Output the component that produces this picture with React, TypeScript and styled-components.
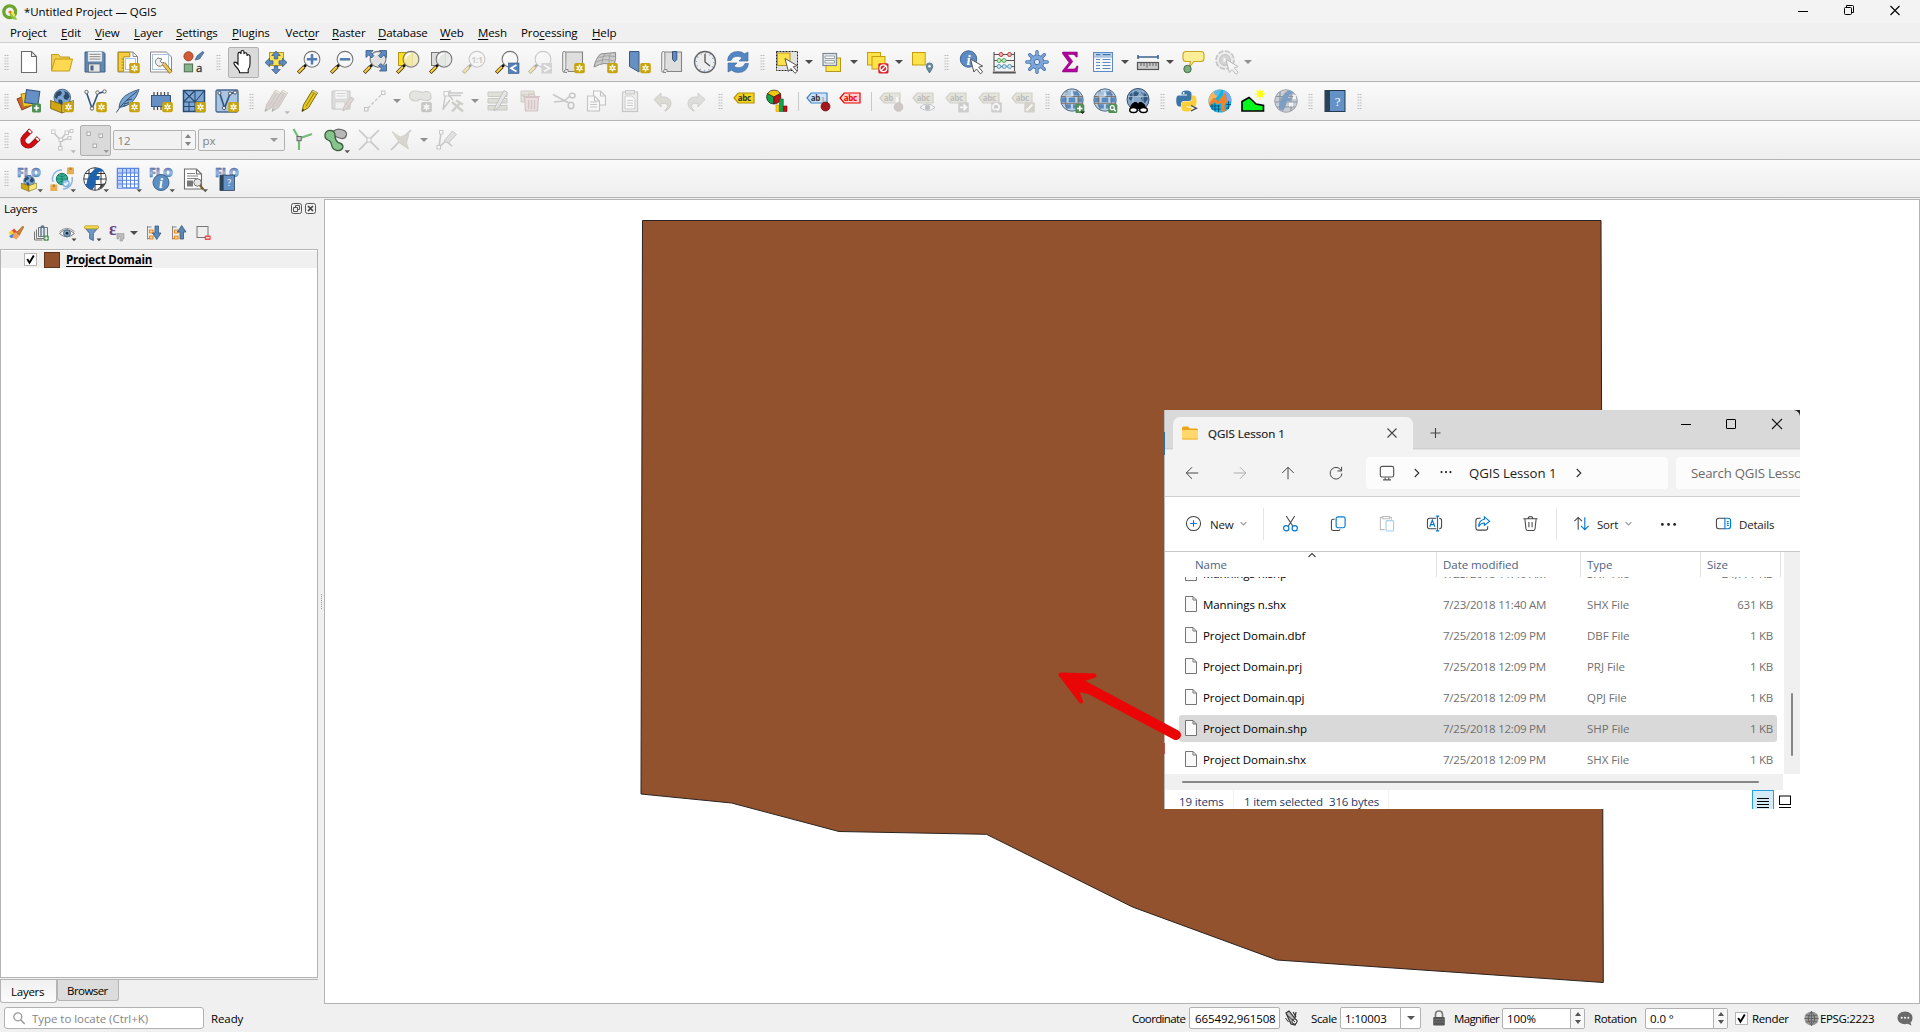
import React from 'react';
import styled, { createGlobalStyle, css } from 'styled-components';

const Global = createGlobalStyle`
  *, *::before, *::after { box-sizing: border-box; }
  html, body { margin: 0; padding: 0; overflow: hidden; }
  body { font-family: "Open Sans", "Noto Sans", sans-serif; font-size: 11.5px; color: #000; background: #f0f0f0; }
`;

/* ---------- shared drawing parts ---------- */

const Star = () => (
  <g>
    <rect x="13.2" y="12.9" width="10.6" height="10.4" rx="1.8" fill="#c8a40c" />
    <path d="M18.5 14.6v7M15.5 16.3l6 3.6M21.5 16.3l-6 3.6" stroke="#fff" strokeWidth="1.5" fill="none" />
    <circle cx="18.5" cy="18.1" r="0.9" fill="#c8a40c" />
  </g>
);
const Plus = ({ x = 15, y = 14.5 }) => (
  <g>
    <rect x={x} y={y} width="9" height="9" rx="1.6" fill="#4f8f55" />
    <path d={`M${x + 4.5} ${y + 1.8}v5.4M${x + 1.8} ${y + 4.5}h5.4`} stroke="#fff" strokeWidth="1.7" />
  </g>
);
const Drop = () => <path d="M20.5 22.3h5.5l-2.75 2.9z" fill="#555" />;
const Glass = ({ fill = '#f7f7f7' }) => (
  <g>
    <path d="M1.2 22.8l6-6" stroke="#4a3a10" strokeWidth="3.6" />
    <path d="M1.6 22.2l5.4-5.4" stroke="#f7cf3f" strokeWidth="2" />
    <path d="M7 16.8l3-2.8" stroke="#111" strokeWidth="2.6" />
    <circle cx="15" cy="9.3" r="7.9" fill={fill} fillOpacity="0.88" stroke="#777" strokeWidth="1.1" />
    <path d="M9.6 8.5a5.6 5.6 0 0 1 5-4.8" stroke="#fff" strokeWidth="1.4" fill="none" />
  </g>
);
const Cursor = ({ x = 10, y = 8 }) => (
  <path transform={`translate(${x} ${y})`} d="M0 0l3.4 13 2.6-3 4 4.8 2.2-1.9-4-4.7 4-1.1z" fill="#fff" stroke="#555" strokeWidth="1" />
);
const Pencil = ({ c = '#e8c91f', d = '#7a6a10' }) => (
  <g>
    <path d="M5 22.5l1.5-6.6L15.2 1.6l5 2.7-8.7 14.4z" fill={c} stroke={d} strokeWidth="1" />
    <path d="M9 17.4L17.8 3" stroke={d} strokeWidth="0.8" />
    <path d="M5 22.5l.6-2.6 1.7.9z" fill="#222" />
    <path d="M14.6 2.6l5 2.8 1-1.6-5-2.7z" fill="#f3e9a8" stroke={d} strokeWidth="0.7" />
  </g>
);
const Tag = ({ fill, stroke, ink, label = 'abc' }: { fill: string; stroke: string; ink: string; label?: string }) => (
  <g>
    <path d="M1 9l4.2-5H21v10H5.2z" fill={fill} stroke={stroke} strokeWidth="1.2" />
    <text x="4.7" y="11.9" fontSize="8" fontWeight="700" fill={ink} fontFamily="Open Sans, sans-serif" letterSpacing="-0.3">{label}</text>
  </g>
);
const GrayTag = ({ label }: { label?: string }) => <Tag fill="#c6c5ad" stroke="#908f78" ink="#555" label={label} />;
const Globe = () => (
  <g>
    <circle cx="12" cy="11" r="11.2" fill="#b9cfe6" stroke="#42617f" strokeWidth="0.9" />
    <path d="M5.5 2.8h5.3v3.8H4.2zM13 2.5h4.6l2.6 4H13zM1.7 8.4h4.8v4.9H1.5zM8.7 8.4h6.5v4.9H8.7zM17.4 8.4h4.9v4.9h-4.9zM4.5 15.2h6.3v4.4H6.4zM13 15.2h6.5l-3 4.4H13z" fill="#2d6cae" opacity="0.7" />
    <path d="M7.5 1.5c-3 6-3 13 0 19M16.5 1.5c3 6 3 13 0 19M.8 7.5h22.4M.8 14.3h22.4" stroke="#7d746d" strokeWidth="1" fill="none" />
    <ellipse cx="9" cy="5.5" rx="5" ry="3" fill="#fff" opacity="0.45" />
  </g>
);
const Earth = () => (
  <g>
    <circle cx="12.3" cy="8.5" r="8.3" fill="#7ba5d3" stroke="#34536f" strokeWidth="0.8" />
    <path d="M6 3.8l4-2.4 2 2-1 2.8-3 1-1 3-2.4-2zM14 2l4 1.700 1.700 4-2.400 3.300-3-1-1-3 2-2zM8.400 10.300l3.500.7 1 3-2.200 2-2.300-2.800z" fill="#2d4a68" />
  </g>
);
const Box = () => (
  <g>
    <path d="M.6 11.500l11.400 4V24L.6 19.500z" fill="#cfa514" stroke="#6d5a10" strokeWidth="0.8" />
    <path d="M23.400 11.500L12 15.500V24l11.400-4.500z" fill="#fbe877" stroke="#6d5a10" strokeWidth="0.8" />
  </g>
);
const FloWord = () => (
  <g>
    <defs>
      <linearGradient id="flo" x1="0" y1="0" x2="0" y2="1">
        <stop offset="0.250" stopColor="#5c7db8" />
        <stop offset="0.550" stopColor="#a9bfe2" />
        <stop offset="0.850" stopColor="#2f86c4" />
      </linearGradient>
    </defs>
    <text x="0" y="10" fontSize="13" fontWeight="800" textLength="24" lengthAdjust="spacingAndGlyphs" fill="url(#flo)" stroke="#4a669a" strokeWidth="0.350" fontFamily="Open Sans, sans-serif">FLO</text>
  </g>
);
const Arrow4 = () => (
  <path d="M12 .5l4.300 4.500h-2.600v3.500h-3.400V5H7.700zM12 23.500l4.300-4.500h-2.600v-3.500h-3.400V19H7.700zM1 12l4.500-4.300v2.600H9v3.400H5.500v2.600zM23 12l-4.500-4.300v2.600H15v3.400h3.500v2.600z" fill="#5d8ac2" stroke="#34577f" strokeWidth="0.7" />
);
const Doc = ({ x = 0, y = 0, w = 15, h = 21 }) => (
  <path d={`M${x} ${y}h${w - 5}l5 5v${h - 5}h-${w}zM${x + w - 5} ${y}v5h5`} fill="#fff" stroke="#6b6b6b" strokeWidth="1.1" />
);
const Book = () => (
  <g>
    <rect x="2" y="1.5" width="20" height="21" fill="#6592c6" stroke="#22384e" strokeWidth="1" />
    <rect x="2" y="1.5" width="5" height="21" fill="#2c4257" />
    <text x="14.7" y="16.5" fontSize="13" textAnchor="middle" fill="#fff" fontFamily="Liberation Serif, serif">?</text>
  </g>
);
const Scroll = () => (
  <g>
    <path d="M4.500 2h17v19.500H7" fill="#dedede" stroke="#848484" strokeWidth="1.1" />
    <path d="M1.700 3.200q0-1.700 1.600-1.700t1.600 1.700v16.500q-1.500 0-1.500 1.500t2.500 1.300H3.500q-1.800 0-1.800-2z" fill="#eee" stroke="#848484" />
    <path d="M5 19.500h2v2.300" stroke="#848484" fill="none" />
  </g>
);
const Corner = ({ fill = '#888', d }: { fill?: string; d: string }) => (
  <g>
    <rect x="13.3" y="13.3" width="10.5" height="10.2" rx="1" fill={fill} />
    <path d={d} stroke="#fff" strokeWidth="1.8" fill="none" />
  </g>
);

const icons: Record<string, React.ReactNode> = {
  newDoc: <Doc x={4.5} y={1.5} />,
  open: (
    <g stroke="#c39a1b" strokeWidth="1">
      <path d="M1.500 20V4.500h7l2 2.500h9v3" fill="#f2cd4c" />
      <path d="M1.500 21L5 9h17.500l-3 12z" fill="#fcd94f" />
    </g>
  ),
  save: (
    <g>
      <path d="M2 2h18.500L22 3.500V22H2z" fill="#6088b5" stroke="#3f5f85" />
      <rect x="5" y="1.8" width="14" height="9.7" fill="#f5f5f5" stroke="#9aa7b5" strokeWidth="0.5" />
      <path d="M6.500 4.300h11M6.500 6.700h11M6.500 9.100h11" stroke="#777" strokeWidth="0.9" />
      <rect x="5.5" y="14" width="11.5" height="8" fill="#e6e6e6" stroke="#555" strokeWidth="0.6" />
      <rect x="7.5" y="15.5" width="3" height="5" fill="#43648b" />
    </g>
  ),
  layout: (
    <g>
      <path d="M2 2h15l4.500 4.500V22H2z" fill="#fff" stroke="#888" />
      <path d="M17 2v4.500h4.500" fill="none" stroke="#888" />
      <path d="M2.300 2.300h11.500v4.500H7.700v14.500H2.300z" fill="#f5cf41" stroke="#b58e0e" />
      <path d="M5.500 9h2M5.500 12h2M5.500 15h2M5.500 18h2" stroke="#8a6c07" strokeWidth="0.8" />
      <rect x="9.5" y="8.5" width="10" height="11" fill="none" stroke="#a9c1e6" />
      <Star />
    </g>
  ),
  layoutMgr: (
    <g>
      <path d="M1.500 2h16l5 5v15h-21z" fill="#fff" stroke="#888" />
      <rect x="3.5" y="4.5" width="16" height="15" fill="none" stroke="#a9c1e6" />
      <path d="M9 8a4.300 4.300 0 1 0 6 4.500L13 13l-1.800-1.800L13 9z" fill="#eee" stroke="#777" />
      <path d="M14.500 13.500l7.500 9" stroke="#8a6c17" strokeWidth="4" />
      <path d="M14.500 13.500l7.300 8.700" stroke="#edca5a" strokeWidth="2.5" />
    </g>
  ),
  style: (
    <g>
      <circle cx="6.5" cy="6.3" r="4.6" fill="#cf5c36" stroke="#8b3a1c" strokeWidth="0.8" />
      <path d="M13 10l2-4 5.500-4.500 1.500 1L17.500 9z" fill="#5d83b3" stroke="#3b5a85" strokeWidth="0.7" />
      <rect x="2.3" y="14" width="8.3" height="7.8" fill="#86b58b" stroke="#4c6c50" />
      <text x="14" y="21.8" fontSize="11.5" fill="#333" stroke="#333" strokeWidth="0.3" fontFamily="Open Sans, sans-serif">a</text>
    </g>
  ),
  hand: (
    <path d="M8.500 21.500q-1-2.500-4.500-6-1.800-2.500-.6-3.200 1.600-.7 3.600 2V4q0-1.600 1.500-1.600T10 4V1.800Q10 .5 11.500.5T13 2v2q0-1.300 1.500-1.300T16 4.200v1.600q.3-1.200 1.500-1.100T19 6.300V14q0 3.500-1.800 5.500v3.200h-8.700z" fill="#fff" stroke="#111" strokeWidth="1.1" />
  ),
  panSel: (
    <g>
      <rect x="5.5" y="2.5" width="14" height="13" fill="#fde24b" stroke="#b6961b" />
      <g transform="translate(0 .5)"><Arrow4 /></g>
    </g>
  ),
  zoomIn: <g><Glass /><path d="M15 4v10.500M9.800 9.300h10.400" stroke="#4e7cb3" strokeWidth="2.5" /></g>,
  zoomOut: <g><Glass /><path d="M9.800 9.300h10.400" stroke="#4e7cb3" strokeWidth="2.5" /></g>,
  zoomFull: (
    <g>
      <Glass fill="#ddd" />
      <path d="M3 .5h7L8 2.700l3 3-2.300 2.300-3-3L3 7.500zM23.500.5h-7l2 2.200-3 3 2.300 2.300 3-3 2.700 2.500zM23.500 21h-7l2-2.200-3-3 2.300-2.300 3 3 2.700-2.500z" fill="#5d8ac2" stroke="#34577f" strokeWidth="0.8" />
    </g>
  ),
  zoomSel: <g><rect x="2.5" y="2.5" width="14" height="13" fill="#fde01e" stroke="#b6961b" /><Glass fill="#f0e9b8" /></g>,
  zoomLayer: <g><rect x="2.5" y="2.5" width="14" height="13" fill="#ddd" stroke="#777" /><Glass fill="#e6e8e6" /></g>,
  zoomNative: (
    <g>
      <Glass />
      <text x="9.5" y="12.5" fontSize="8" fontWeight="700" fill="#777" fontFamily="Open Sans, sans-serif">1:1</text>
    </g>
  ),
  zoomLast: <g><Glass /><rect x="13.3" y="13" width="10.7" height="10.5" fill="#5580b8" stroke="#34577f" strokeWidth="0.6" /><path d="M21.500 15l-5.500 3.200 5.500 3.300" stroke="#fff" strokeWidth="1.8" fill="none" /></g>,
  zoomNext: <g><Glass /><rect x="13.3" y="13" width="10.7" height="10.5" fill="#999" /><path d="M16 15l5.500 3.200-5.500 3.300" stroke="#fff" strokeWidth="1.8" fill="none" /></g>,
  mapView: <g><Scroll /><Star /></g>,
  mapView3d: (
    <g>
      <path d="M0 17Q2 8 6.500 4L21.500 2.500q1 5-1.500 13.500Q11 10.500 0 17z" fill="#ccc" stroke="#888" />
      <path d="M4.500 7.500q8-3 17-1M2 12q8-4 18.500-1M11 3.500Q8 8 8 13.500M16 3.500Q15 8 15 14" stroke="#999" strokeWidth="0.8" fill="none" />
      <Star />
    </g>
  ),
  bookmarkNew: <g><path d="M2.500 1.500h9.500V22L2.500 16.500z" fill="#6690c4" stroke="#395a80" /><Star /></g>,
  bookmarks: <g><Scroll /><path d="M12.500 1.500h4.300v8l-2.100 2.200-2.200-2.200z" fill="#5d8ac2" stroke="#2f4d70" strokeWidth="0.9" /></g>,
  clock: (
    <g>
      <circle cx="12" cy="12" r="10.5" fill="#ededed" stroke="#666" strokeWidth="1.3" />
      <circle cx="12" cy="12" r="8.8" fill="none" stroke="#5d8ac2" strokeWidth="1.4" strokeDasharray="0.8 3.81" />
      <path d="M12 4v8l5 4" stroke="#555" strokeWidth="1.3" fill="none" />
    </g>
  ),
  refresh: (
    <g fill="#5286c4" stroke="#3b679c" strokeWidth="0.6">
      <path d="M1.500 10.500Q2.500 1.500 12 1.500q4 0 6.500 2.300L22 2v9h-9l3-3q-1.500-1.700-4-1.700Q6.500 6.300 5 10.500z" />
      <path d="M22.500 13.500q-1 9-10.500 9-4 0-6.500-2.300L2 22v-9h9l-3 3q1.500 1.700 4 1.700 5.500 0 7-4.200z" />
    </g>
  ),
  selectRect: (
    <g>
      <rect x="1.5" y="1.5" width="21" height="19" fill="#e2e2e2" stroke="#222" strokeDasharray="2 1" />
      <rect x="2.5" y="3" width="12.5" height="12.5" fill="#fde24b" stroke="#b6961b" />
      <Cursor x={10} y={8.5} />
    </g>
  ),
  selectForm: (
    <g>
      <rect x="6" y="8" width="14.5" height="13.5" fill="#fde94b" stroke="#b6961b" />
      <rect x="3" y="3.5" width="13.5" height="12" fill="#ececec" stroke="#7b8893" strokeWidth="1.2" />
      <path d="M5 6h9.500v2.500H5zM5 10.500h9.500V13H5z" fill="#fff" stroke="#8b979f" strokeWidth="0.9" />
    </g>
  ),
  deselect: (
    <g>
      <rect x="2.5" y="2.5" width="13" height="12.5" fill="#fde24b" stroke="#c69e0a" />
      <rect x="7" y="6.5" width="13" height="12.5" fill="#fde24b" stroke="#c69e0a" />
      <rect x="13.3" y="13.2" width="10.2" height="10.2" rx="1.5" fill="#d8232a" />
      <circle cx="18.4" cy="18.3" r="3.4" fill="none" stroke="#fff" strokeWidth="1.3" />
      <path d="M16 20.700l4.800-4.800" stroke="#fff" strokeWidth="1.3" />
    </g>
  ),
  selectLoc: (
    <g>
      <rect x="2.5" y="2.5" width="12.7" height="12.5" fill="#fde24b" stroke="#c69e0a" />
      <path d="M19.500 23q-3.300-4.500-3.300-6.800a3.300 3.300 0 0 1 6.600 0q0 2.300-3.300 6.800z" fill="#6a8ca0" stroke="#496a7c" strokeWidth="0.7" />
      <circle cx="19.5" cy="16.2" r="1.2" fill="#fff" />
    </g>
  ),
  identify: (
    <g>
      <circle cx="9.5" cy="9" r="8.2" fill="#5d8ac2" stroke="#40659a" />
      <text x="9.5" y="14.5" fontSize="15" fontWeight="700" fontStyle="italic" textAnchor="middle" fill="#fff" fontFamily="Liberation Serif, serif">i</text>
      <Cursor x={11.5} y={9} />
    </g>
  ),
  abacus: (
    <g>
      <path d="M2 2v19M22.500 2v19M2 4.500h20.500M2 10.500h20.500M2 16.500h20.500" stroke="#555" strokeWidth="1.1" />
      <path d="M.8 22.500h23" stroke="#555" strokeWidth="2" />
      <g strokeWidth="1">
        <g fill="#f1b2b2" stroke="#c33c3c"><circle cx="9" cy="4.5" r="2" /><circle cx="17.5" cy="4.5" r="2" /></g>
        <g fill="#c6ecc6" stroke="#58a45c"><circle cx="7" cy="10.5" r="2" /><circle cx="12" cy="10.5" r="2" /></g>
        <g fill="#c8e4f2" stroke="#5f9ab8"><circle cx="7" cy="16.5" r="2" /><circle cx="12.3" cy="16.5" r="2" /><circle cx="17.6" cy="16.5" r="2" /></g>
      </g>
    </g>
  ),
  gear: (
    <g strokeLinecap="round">
      <path d="M12 1.800v20.400M1.800 12h20.400M4.700 4.700l14.600 14.600M19.300 4.700L4.700 19.300" stroke="#4674ae" strokeWidth="3.4" />
      <circle cx="12" cy="12" r="7" fill="#7ea6d8" stroke="#4674ae" />
      <path d="M12 2v20M2 12h20M4.900 4.900l14.200 14.200M19.100 4.900L4.900 19.100" stroke="#7ea6d8" strokeWidth="1.9" />
      <circle cx="12" cy="12" r="2.7" fill="#dfe9f5" stroke="#4674ae" />
    </g>
  ),
  sigma: <path d="M4.500 2h14.800v5h-1.300q-.6-2.500-3-2.500H9.500l5.300 7-6 7.500h6.700q2.500 0 3.200-3h1.300l-.8 6H4.500v-1.300L11 12.600 4.500 3.700z" fill="#b3009d" stroke="#7c006d" strokeWidth="0.5" />,
  table: (
    <g>
      <rect x="2.5" y="2.5" width="19" height="19" fill="#f4f8fd" stroke="#5d8ac2" />
      <rect x="3" y="3" width="18" height="3.5" fill="#b8d4f0" />
      <path d="M5 4.700h4.500M11.500 4.700h8" stroke="#4773ab" strokeWidth="1.2" />
      <path d="M3 7h18" stroke="#5d8ac2" strokeWidth="0.7" />
      <path d="M5 9.500h4M5 12.500h4M5 15.500h4M5 18.500h4M11.500 9.500h8M11.500 12.500h8M11.500 15.500h8M11.500 18.500h8" stroke="#5d8ac2" strokeWidth="1" />
    </g>
  ),
  ruler: (
    <g>
      <path d="M2 7h20M2 5v4M22 5v4" stroke="#3b648e" strokeWidth="1.6" />
      <rect x="1.5" y="12.5" width="21" height="7" fill="#c9c9c9" stroke="#555" strokeWidth="1.2" />
      <path d="M5 13v3M8 13v3M11 13v4.500M14 13v3M17 13v3M20 13v3" stroke="#555" strokeWidth="0.9" />
    </g>
  ),
  tip: (
    <g>
      <path d="M5 1.500h15q3 0 3 3v4q0 3-3 3h-7L8 17.500l1.500-6H5q-3 0-3-3v-4q0-3 3-3z" fill="#fbee97" stroke="#c8a51d" strokeWidth="1.1" />
      <circle cx="6.5" cy="19" r="3.7" fill="#7cae80" stroke="#3f6d47" />
    </g>
  ),
  actionGray: (
    <g>
      <circle cx="11" cy="10" r="9" fill="#ddd" stroke="#666" strokeWidth="1.6" strokeDasharray="5.5 1.5" />
      <circle cx="11" cy="10" r="5.5" fill="#999" stroke="#666" />
      <path d="M9.500 7.500v5l4-2.500z" fill="#fff" />
      <Cursor x={12} y={9.5} />
    </g>
  ),
  dataSource: (
    <g>
      <rect x="2" y="7" width="12" height="12" transform="rotate(-24 8 13)" fill="#d0662e" stroke="#8d3f18" />
      <rect x="5" y="4" width="12" height="13" transform="rotate(-10 11 10)" fill="#f6c52f" stroke="#a67c12" />
      <rect x="8.5" y="1.5" width="13.5" height="13" transform="rotate(8 15 8)" fill="#6690c4" stroke="#33557d" />
      <Plus />
    </g>
  ),
  geopackage: <g><Earth /><Box /><Star /></g>,
  shapefile: (
    <g>
      <path d="M3.500 3.500l5.500 16L15 4.500l7-2" stroke="#34577f" strokeWidth="1.6" fill="none" />
      <g fill="#fff" stroke="#555" strokeWidth="0.9"><circle cx="3.5" cy="3" r="1.7" /><circle cx="9" cy="19.5" r="1.7" /><circle cx="14.5" cy="3.5" r="1.7" /><circle cx="21.5" cy="2.5" r="1.7" /></g>
      <Star />
    </g>
  ),
  feather: (
    <g>
      <path d="M3 18.500Q4 9 12 5q5-3 11-4.500Q21 8 16.500 12.500 12 17 3 18.500z" fill="#7ba5d3" stroke="#3d6186" />
      <path d="M.3 23.500Q6 14 21 2.500M8 15l5-1.500M10.500 11.500l5.500-1.500M7 17l3-.5" stroke="#2f4d6f" strokeWidth="1" fill="none" />
      <Star />
    </g>
  ),
  memory: (
    <g>
      <path d="M5 3v18M8.500 3v18M12 3v18M15.500 3v18M19 3v12" stroke="#444" strokeWidth="1.2" />
      <rect x="2.5" y="6.5" width="19" height="11" fill="#6690c4" stroke="#34577f" />
      <Star />
    </g>
  ),
  meshLayer: (
    <g>
      <rect x="1.5" y="1.5" width="21" height="21" fill="#7da7d6" stroke="#2b4b6e" strokeWidth="1.5" />
      <path d="M1.500 13h21M13 1.500v21M1.500 1.500L13 13M13 1.500L1.500 13M22.500 1.500L13 13M7 13v9M1.500 17.500H13" stroke="#2b4b6e" strokeWidth="1.1" />
      <Star />
    </g>
  ),
  virtual: (
    <g>
      <rect x="1" y="1" width="22" height="22" rx="1.5" fill="#a8c6e4" stroke="#45688f" strokeWidth="1.3" />
      <path d="M5 5l4.500 14L15 5l4-1.500" stroke="#34577f" strokeWidth="1.7" fill="none" />
      <g fill="#fff" stroke="#445" strokeWidth="0.9"><circle cx="4.5" cy="4" r="1.6" /><circle cx="9" cy="19" r="1.6" /><circle cx="15" cy="4.5" r="1.6" /><circle cx="20" cy="3.5" r="1.6" /></g>
      <Star />
    </g>
  ),
  pencils: (
    <g>
      <g transform="translate(-4 0)"><Pencil c="#a8958f" d="#7d6c66" /></g>
      <g transform="translate(3 0)"><Pencil c="#a8958f" d="#7d6c66" /></g>
    </g>
  ),
  pencil: <Pencil />,
  saveEdits: (
    <g>
      <path d="M2 2h18v18H2z" fill="#b5b5b5" stroke="#777" />
      <rect x="5" y="2" width="12" height="8" fill="#fff" stroke="#888" strokeWidth="0.6" />
      <path d="M6.500 4.500h9M6.500 7h9" stroke="#888" />
      <rect x="5" y="13" width="10" height="7" fill="#eee" stroke="#777" strokeWidth="0.6" />
      <path d="M13 22l1-4.500L21 8l3 2-7 9.500z" fill="#b9a09a" stroke="#86706a" />
    </g>
  ),
  addLine: (
    <g>
      <path d="M5 19L19 5" stroke="#777" strokeWidth="1.4" strokeDasharray="3 2" />
      <g fill="#fff" stroke="#666"><rect x="1.5" y="18.5" width="3.5" height="3.5" /><rect x="18.5" y="2" width="3.5" height="3.5" /></g>
    </g>
  ),
  addPoly: (
    <g>
      <path d="M1.500 7q0-5 6-5 3 0 5 1t5-.5q5.500 0 5.500 5 0 4-4 4-3 0-5-1t-5 1.500q-7.500 0-7.500-5z" fill="#c5c8bd" stroke="#84877c" strokeWidth="1.2" />
      <rect x="13.2" y="12.9" width="10.6" height="10.4" rx="1.8" fill="#77786a" />
      <path d="M18.500 14.600v7M15.500 16.300l6 3.600M21.500 16.300l-6 3.600" stroke="#fff" strokeWidth="1.5" fill="none" />
    </g>
  ),
  vertex: (
    <g stroke="#777" fill="none">
      <path d="M4.500 5L2 21M7 5l5 6M7 4h15M7 6.500h13M9 1v3M2 20l7-9" strokeWidth="1.4" />
      <rect x="3" y="2.5" width="4.5" height="4.5" fill="#fff" />
      <path d="M11 22.500l9-9.500M15 11.500l7 4M11 13l11 9.500" strokeWidth="2.4" stroke="#8b8b80" />
    </g>
  ),
  tableEdit: (
    <g>
      <path d="M2 3h19v4.500H2zM2 9.500h19v4.500H2zM2 16.500h19V21H2z" fill="#b8b7a4" stroke="#7b7a6b" />
      <path d="M8 22l1.500-5L18 1.500l3.500 2L13 18z" fill="#ccc" stroke="#666" />
    </g>
  ),
  trash: (
    <g>
      <path d="M2 2h13v4H2zM2 6h4v7H2z" fill="#c1beaa" stroke="#87846f" />
      <path d="M5.500 8.500h14l-1 13.500h-12z" fill="#d6b9bb" stroke="#9c6c70" strokeWidth="1.2" />
      <path d="M4 7.500h17M9.500 7V5h6v2M9.500 11v9M12.500 11v9M15.500 11v9" stroke="#9c6c70" strokeWidth="1.2" fill="none" />
    </g>
  ),
  cut: (
    <g fill="none" stroke="#777" strokeWidth="1.6">
      <path d="M1 5.500l16 8.500M2 13l10-1 6-5" />
      <ellipse cx="20.3" cy="6.5" rx="2.8" ry="2.3" /><ellipse cx="19" cy="16.5" rx="2.8" ry="3.2" />
    </g>
  ),
  copy: (
    <g>
      <Doc x={8.5} y={2} w={12} h={14} />
      <Doc x={2.5} y={7} w={12} h={15} />
      <path d="M5 13h7M5 15.500h7M5 18h7" stroke="#777" />
    </g>
  ),
  paste: (
    <g>
      <rect x="4.5" y="3" width="15" height="19.5" fill="#e4e4e0" stroke="#777" strokeWidth="1.2" />
      <rect x="7.5" y="1.5" width="9" height="3.5" fill="#ccc" stroke="#777" />
      <path d="M7 7h7l3 3v10H7z" fill="#fff" stroke="#888" />
      <path d="M9 11.500h6M9 14h6M9 16.500h6" stroke="#888" />
    </g>
  ),
  undo: <path d="M3 10.500L10 4v4h3.500q6.500.5 6.500 7 0 4-5.500 7-1 .3-.5-.5 3-3 2.500-5t-3-2.200H10V18z" fill="#b3ab9b" stroke="#8f887a" />,
  redo: <path d="M21 10.500L14 4v4h-3.500Q4 8.500 4 15q0 4 5.500 7 1 .3.5-.5-3-3-2.500-5t3-2.200H14V18z" fill="#b5b8ac" stroke="#8f9188" />,
  tagYellow: <Tag fill="#f3d51b" stroke="#b5930c" ink="#333" />,
  diagram: (
    <g>
      <path d="M8 8L1.500 4.500A7 7 0 0 0 8 15z" fill="#15a04a" stroke="#222" strokeWidth="0.7" />
      <path d="M8 8L1.500 4.500q2.500-3.500 6.500-3.500t6.500 3.500z" fill="#f3c70d" stroke="#222" strokeWidth="0.7" />
      <path d="M8 8l6.500-3.500q1.500 5-1.500 8.500-2 2-5 2z" fill="#c00f15" stroke="#222" strokeWidth="0.7" />
      <path d="M10 16h3v6.500h-3z" fill="#f7d21a" stroke="#d79a00" strokeWidth="0.6" />
      <path d="M13.500 10h3.800v12.500h-3.800z" fill="#15a04a" stroke="#0c5e2b" strokeWidth="0.6" />
      <path d="M17.500 17h3.500v5.500h-3.500z" fill="#c00f15" stroke="#6e0508" strokeWidth="0.6" />
    </g>
  ),
  tagPin: (
    <g>
      <Tag fill="#cfe4fa" stroke="#3f83cc" ink="#333" label="ab" />
      <path d="M18 8v8" stroke="#ddd" strokeWidth="3" /><path d="M17 8v8" stroke="#888" strokeWidth="0.8" />
      <circle cx="19.5" cy="17.5" r="4.5" fill="#a3171d" stroke="#6d0d11" strokeWidth="0.7" />
    </g>
  ),
  tagRed: <Tag fill="#ffd3d3" stroke="#f00000" ink="#f00000" />,
  tagPinGray: <g><GrayTag label="ab" /><path d="M18 8v8" stroke="#fff" strokeWidth="2.5" /><circle cx="19.5" cy="18" r="4.3" fill="#8f7777" stroke="#7a6666" /></g>,
  tagEye: <g><GrayTag /><path d="M8 18.500q7-7 15 0-7 6-15 0z" fill="#fff" stroke="#666" /><circle cx="15.5" cy="18.3" r="2.6" fill="#567" /></g>,
  tagMove: <g><GrayTag /><Corner d="M15 18.400h6M18.500 15.500l3 2.900-3 3" /></g>,
  tagRotate: <g><GrayTag /><Corner d="M17 21a3.200 3.200 0 1 1 3-.5M21.500 17.500l-1.300 3.300-2.700-1" /></g>,
  tagEdit: <g><GrayTag /><Corner fill="#999580" d="M15.500 21.500l6-6" /></g>,
  globePlus: <g><Globe /><Plus x={15.3} y={15} /><path d="M20 22.500h5l-2.500 2.500z" fill="#222" /></g>,
  globeFind: <g><Globe /><rect x="15.3" y="15" width="9" height="9" rx="1.5" fill="#4f8f55" /><circle cx="19.3" cy="18.7" r="2" fill="none" stroke="#fff" strokeWidth="1.2" /><path d="M20.800 20.300l2 2" stroke="#fff" strokeWidth="1.4" /></g>,
  binoculars: (
    <g>
      <circle cx="12" cy="10.5" r="11" fill="#86a9ca" stroke="#33506d" />
      <path d="M4 5l6-3 3 2-2 3-4 1-2 4-2-2zM15 3l5 2 2 5-3 4-3-2-1-3 2-2z" fill="#355a80" />
      <path d="M2 7.500h20M7 2v17M17 2v17" stroke="#c9d7e5" strokeWidth="0.6" />
      <path d="M4 20q0-5 4.500-7h2l1.500 1.500 1.500-1.500h2q4.500 2 4.500 7v2h-6v-2h-4v2H4z" fill="#000" />
      <ellipse cx="7.5" cy="21" rx="3.8" ry="2.5" fill="#fff" stroke="#000" strokeWidth="1.4" /><ellipse cx="17.5" cy="21" rx="3.8" ry="2.5" fill="#fff" stroke="#000" strokeWidth="1.4" />
    </g>
  ),
  python: (
    <g>
      <path d="M11.500 1.500q5 0 5 3.500v4.500q0 2.500-3 2.500H9q-3 0-3 3v2.500H4q-2.800-.5-2.800-6T4 6.500h8V5.500H6.500V4.500q0-3 5-3z" fill="#3a75a8" />
      <path d="M11.500 22.500q-5 0-5-3.500v-4q0-2.500 3-2.500H14q3 0 3-3V6.500h2q2.500.5 2.500 6T19 17.500h-7.500v1h5v1.500q0 2.500-5 2.500z" fill="#fccf3a" />
      <circle cx="8.7" cy="4" r="0.9" fill="#fff" />
      <path d="M16 16.500l5.500 2.700-5.500 2.800" stroke="#444" strokeWidth="1.3" fill="none" />
    </g>
  ),
  mesh: (
    <g>
      <circle cx="12" cy="12" r="11.5" fill="#12b4e4" />
      <path d="M.5 12A11.500 11.500 0 0 1 13.500.6L8 9 5.500 9 1.500 15q-1-1-1-3z" fill="#fbb45e" />
      <path d="M5.500 2.500Q9 .5 13.500.6L10 7 7 6z" fill="#59b9e8" />
      <path d="M15.500 1q7.500 3 8 11l-4.500 1-1-9-3 3z" fill="#86a6f0" />
      <path d="M1 14L6.500 8.500l3.500 4L17.500 3l1.500 10-2.500 3 .5 6-3.500 1-.5-9-4 1.500-2.500-2.500L2 17z" fill="#f5812a" />
      <path d="M2 17h10M3.500 20h9M7 14.500v8M10.500 16v7M18 15.500h5M18 19h3M20.500 12v8M4 15v5" stroke="#0a4e76" strokeWidth="0.9" />
    </g>
  ),
  profile: (
    <g>
      <path d="M1 22v-9.500L8 8.500l4 3.500 3 3 7.500 1.500V22z" fill="#00f81c" stroke="#000" strokeWidth="1.6" />
      <circle cx="19" cy="5" r="3" fill="#ffff10" />
      <path d="M19 0v10.500M14 5h10M15.500 1.500l7 7M22.500 1.500l-7 7" stroke="#ffff10" strokeWidth="1.1" />
    </g>
  ),
  floGray: (
    <g>
      <circle cx="12" cy="12" r="11.3" fill="#c9ced4" stroke="#a0a4aa" />
      <path d="M2 7.500h20M1 13h22M3 18h18M6 3v18M17 2v20" stroke="#8d949c" strokeWidth="1.2" />
      <path d="M5 19Q6 6 14 1.500q4-.5 6 2.500-5 1-6 5h4l-2 3h-3Q12 18 9 22q-2-.5-4-3z" fill="#7e9dc3" />
      <path d="M15 13.500h4v4h-4zM19 6h3v4h-3z" fill="#fff" opacity="0.8" />
    </g>
  ),
  book: <Book />,
  magnet: (
    <g transform="translate(-0.8 0.8) rotate(45 12 12) scale(.84) translate(2.3 1.5)">
      <path d="M5.500 2v10.500a6.500 6.500 0 0 0 13 0V2" fill="none" stroke="#8d1016" strokeWidth="6" />
      <path d="M5.500 3v9.500a6.500 6.500 0 0 0 13 0V3" fill="none" stroke="#d40c12" strokeWidth="4.6" />
      <path d="M5.500 1.600v3.800M18.500 1.600v3.800" fill="none" stroke="#8d1016" strokeWidth="6" />
      <path d="M5.500 2.400v2.400M18.500 2.400v2.400" fill="none" stroke="#fff" strokeWidth="4.4" />
    </g>
  ),
  snapV: (
    <g stroke="#777" fill="none">
      <path d="M3 4l7.500 8L17 4M10.500 12v8M18.500 4l3-1M11 13l8-3" strokeWidth="1.7" />
      <g fill="#fff"><rect x="1.5" y="2" width="3.5" height="3.5" /><rect x="9" y="10" width="3.5" height="3.5" /><rect x="15" y="3" width="3.5" height="3.5" /><rect x="20" y="1.5" width="3" height="3" /><rect x="8.5" y="18.5" width="3.5" height="3.5" /><rect x="18" y="8.5" width="3" height="3" /></g>
    </g>
  ),
  snapType: (
    <g>
      <g fill="#f4f4f4" stroke="#a5a5a5" strokeWidth="0.9"><rect x="4" y="4" width="3.5" height="3.5" /><rect x="16" y="6" width="3.5" height="3.5" /><rect x="10" y="16" width="3.5" height="3.5" /></g>
      <path d="M20.500 22h5.500l-2.750 2.900z" fill="#999" />
    </g>
  ),
  topo: (
    <g>
      <path d="M8 10.500L2.500 1M8 10.500L21 6M8 10.500V22" stroke="#72bd78" strokeWidth="2.2" fill="none" />
      <rect x="6" y="8.5" width="4.2" height="4.2" fill="#c8c8c8" stroke="#666" />
    </g>
  ),
  overlap: (
    <g>
      <path d="M9 3.500q4-3.500 8-2 6 1 5.500 5.500-1 4-5.500 3.500-4-1-7-3z" fill="#b8b8b8" stroke="#666" strokeWidth="1.2" />
      <path d="M1 6.500q1-4.500 6-4 4 .5 4 5t3 7q5 1 5 4.500-1 4-6 3.500-5-1-5.500-6Q7 13 4 12 .5 10.500 1 6.500z" fill="#85c48a" stroke="#3c5f3f" strokeWidth="1.3" />
    </g>
  ),
  cross: <g stroke="#777"><path d="M2 2l20 20M22 2L2 22" strokeWidth="1.7" /><rect x="10" y="10" width="4" height="4" fill="#fff" /></g>,
  selfSnap: <g><path d="M1 22L21 2" stroke="#777" strokeWidth="1.7" /><path d="M2 3.500l8 5.500 9-3-2.500 9 2 6-9-6z" fill="#a59e88" stroke="#7d7765" strokeWidth="0.6" /></g>,
  trace: (
    <g stroke="#777" fill="none"><path d="M6 5L4 19l7-6 6 5" strokeWidth="1.6" /><g fill="#fff"><rect x="4.5" y="2.5" width="3.5" height="3.5" /><rect x="2" y="17.5" width="3.5" height="3.5" /></g><path d="M9 13l8.500-10 4 3.500-8 8.500z" fill="#bbb" /></g>
  ),
  floOpen: <g><FloWord /><g transform="translate(4 8.5) scale(.66)"><Earth /><Box /></g></g>,
  floCycle: (
    <g>
      <path d="M3 15A9 9 0 0 1 12 3M22 10a9.500 9.500 0 0 1-9 12" stroke="#8fb6de" strokeWidth="1.5" fill="none" />
      <circle cx="12" cy="12" r="5.7" fill="#39b59a" stroke="#197c69" />
      <path d="M6.500 12h11M12 6.500v11M8 8.500q4 2.500 8 0M8 15.500q4-2.500 8 0" stroke="#14705e" strokeWidth="0.7" fill="none" />
      <circle cx="16" cy="16.5" r="3.4" fill="#9fc9f1" stroke="#5f97d4" strokeWidth="0.7" /><path d="M14.300 16.500l1.400 1.400 2.200-2.500" stroke="#fff" strokeWidth="1.2" fill="none" />
      <path d="M17 .5h7v6.700h-7zM.3 17.500h7v6.500h-7z" fill="#e8ae54" /><path d="M19.500.5h2v2.500h-2zM2.800 17.500h2V20h-2z" fill="#b77b25" />
    </g>
  ),
  floGlobe: (
    <g>
      <circle cx="12" cy="12" r="11.3" fill="#fff" stroke="#333" strokeWidth="0.9" />
      <path d="M2 6.500h20M1 12h22M2.500 17.500h19M6 2.500v19M12 .7v22.500M18 2.500v19" stroke="#222" strokeWidth="0.9" />
      <path d="M3 19Q5 5 14 .8q5 0 7 3.700-6-1-7.500 4.500h3.500l-1.500 4h-3Q13 19 9 23q-3-1-6-4z" fill="#1f63ad" />
      <path d="M14 22.500q6-1.500 8.500-6.500l-4 1q-1 3-4.500 5.500z" fill="#444" />
    </g>
  ),
  floGrid: (
    <g>
      <rect x="1.5" y="1.5" width="21" height="19.5" fill="#fff" stroke="#5a84e6" strokeWidth="1.5" />
      <path d="M2 2h20v4H2zM2 2h4.500v19H2z" fill="#bcd0fb" />
      <path d="M1.500 6h21M1.500 9.500h21M1.500 13.300h21M1.500 17h21M6.500 1.500v19.500M10.500 1.500v19.500M14.500 1.500v19.500M18.500 1.500v19.500" stroke="#5a84e6" strokeWidth="1" />
    </g>
  ),
  floInfo: (
    <g>
      <FloWord />
      <circle cx="12" cy="15.5" r="8" fill="#5d8fc2" stroke="#3a658f" />
      <text x="12" y="20.5" fontSize="14" fontStyle="italic" fontWeight="700" textAnchor="middle" fill="#fff" fontFamily="Liberation Serif, serif">i</text>
    </g>
  ),
  floReport: (
    <g>
      <Doc x={2.5} y={2} w={17} h={20} />
      <path d="M5 6.500h8M5 9h11M5 11.500h11" stroke="#777" strokeWidth="0.9" />
      <rect x="5" y="13.5" width="6" height="6" fill="#777" />
      <circle cx="15.5" cy="15.5" r="3.7" fill="#e6e6e6" stroke="#777" /><path d="M18 18.500l3.500 4" stroke="#7a5c22" strokeWidth="2" />
    </g>
  ),
  floHelp: <g><FloWord /><g transform="translate(3.5 7) scale(.73)"><Book /></g></g>,
};

/* layers panel icons, 16px grid */
const SmallDrop = () => <path d="M12.500 13.500h5l-2.500 2.700z" fill="#444" />;
const TreeLines = () => (
  <g>
    <path d="M1.500 1v13.500M1.500 2h4M1.500 13.500h4" stroke="#888" fill="none" />
    <path d="M3.500 5h3.500v3H3.500zM3.500 11h3.500v3H3.500z" fill="#ffd9a0" stroke="#ef8a1d" strokeWidth="1.2" />
  </g>
);
const small: Record<string, React.ReactNode> = {
  brush: (
    <g>
      <path d="M3 6.500l3-3 3 3-3 3z" fill="#e8453b" /><path d="M.5 8l3-3 3 3.500-3.500 2z" fill="#f7d038" /><path d="M1 11l5-2.500 1 4-4 .5z" fill="#4d7fd0" />
      <path d="M6 8l4-1.500L12 10l-3.500 4.500-4-2z" fill="#f0a060" />
      <path d="M8.500 7.500l3 2.500L15.800 2l-1-1z" fill="#c9812a" stroke="#8a5516" strokeWidth="0.5" />
    </g>
  ),
  group: (
    <g fill="#e8e8e8" stroke="#777" strokeWidth="1">
      <path d="M5.500 2.500h9v9h-9z" /><path d="M3.500 4.500v9h8M1.500 6.500v8.500h8" fill="none" />
      <path d="M8 12V3.500q0-2.500 1.500-2.500T11 3.500V11" fill="none" stroke="#4d7393" strokeWidth="1.3" />
      <rect x="10.5" y="10.5" width="5.3" height="5.3" rx="1" fill="#4f8f55" stroke="none" /><path d="M13.200 11.500v3.300M11.500 13.200h3.300" stroke="#fff" />
    </g>
  ),
  eye: (
    <g>
      <path d="M.5 8.500Q7.500 1 15.500 8.500 7.500 15 .5 8.500z" fill="#fff" stroke="#777" /><path d="M.5 6.500Q7.500 0 15.500 6.500" fill="none" stroke="#999" />
      <circle cx="8" cy="8.3" r="3.5" fill="#7f9fc0" stroke="#4f6f92" /><circle cx="8" cy="8.3" r="1.3" fill="#122" />
      <SmallDrop />
    </g>
  ),
  filter: (
    <g>
      <path d="M.8 2.500h13.400L9.300 8.500v7l-3.600-1.800V8.500z" fill="#6d97c6" stroke="#3d648f" strokeWidth="0.9" />
      <rect x=".5" y=".8" width="14" height="3" rx="1" fill="#f6dc4c" stroke="#b3951b" strokeWidth="0.7" />
      <SmallDrop />
    </g>
  ),
  epsilon: (
    <g>
      <text x="0" y="10" fontSize="18" fontWeight="700" fill="#6d4580" fontFamily="Liberation Serif, serif">ε</text>
      <path d="M8 8.500h7v5.500h-1.500V16h-2.500v-4.500H9.500V14H8z" fill="#bbb" stroke="#999" strokeWidth="0.6" />
    </g>
  ),
  expand: <g><TreeLines /><path d="M9 1h3.500v7H15l-4.300 6.500L6.500 8H9z" fill="#5b88b8" stroke="#34577f" strokeWidth="0.8" /></g>,
  collapse: <g><TreeLines /><path d="M9 14h3.500V7H15L10.700.5 6.500 7H9z" fill="#5b88b8" stroke="#34577f" strokeWidth="0.8" /></g>,
  remove: (
    <g>
      <rect x="1" y="1.5" width="11" height="11" fill="#efefef" stroke="#777" /><rect x="8.7" y="10.5" width="6" height="4.5" rx="1" fill="#ef4b4b" /><path d="M10 12.800h3.500" stroke="#fff" strokeWidth="1.2" />
    </g>
  ),
};

/* ---------- frame ---------- */

const Window = styled.div`
  position: relative; width: 1920px; height: 1032px; display: flex; flex-direction: column; background: #f0f0f0; overflow: hidden;
`;
const TitleBar = styled.div`
  height: 23px; display: flex; align-items: center; background: #f3f3f3; padding-left: 2px; flex: none;
`;
const TitleText = styled.div`flex: 1; padding-left: 6px; line-height: 22px; letter-spacing: -0.07px;`;
const Caption = styled.div`display: flex; gap: 30px; padding: 0 17px 2px 0; svg { display: block; width: 16px; height: 16px; }`;
const MenuBar = styled.nav`
  height: 20px; flex: none; display: flex; padding-left: 10px; border-bottom: 1px solid #cfcfcf;
`;
const MenuItem = styled.span<{ $w: number }>`
  width: ${(p) => p.$w}px; line-height: 20px; white-space: nowrap; letter-spacing: -0.12px;
  u { text-underline-offset: 2px; text-decoration-thickness: 1px; }
`;
const ToolRow = styled.div<{ $last?: boolean }>`
  height: ${(p) => (p.$last ? 38 : 39)}px; flex: none; display: flex; align-items: center;
  background: linear-gradient(#fafafa, #eeeeee); border-bottom: 1px solid #b4b4b4;
`;
const Handle = styled.div<{ $w: number }>`
  width: ${(p) => p.$w}px; height: 17px; display: flex; justify-content: center; padding-left: ${(p) => (p.$w < 14 ? 1 : 0)}px;
  &::before { content: ''; width: 5px; background-image: radial-gradient(circle, #a8a8a8 0.7px, transparent 0.9px); background-size: 2.5px 2.83px; }
`;
const Slot = styled.div<{ $dim?: boolean; $active?: boolean }>`
  width: 33px; height: 32px; display: flex; align-items: center; justify-content: center; flex: none;
  svg { width: 24px; height: 24px; overflow: visible; display: block; ${(p) => p.$dim && css`opacity: 0.35;`} }
  ${(p) => p.$active && css`
    width: 31px; height: 31px; margin: 0 1px; border: 1px solid #b0b0b0; border-radius: 2px; background: #dadada;
  `}
`;
const ArrowSlot = styled.div<{ $dim?: boolean; $w?: number }>`
  width: ${(p) => p.$w ?? 12}px; display: flex; justify-content: center; opacity: ${(p) => (p.$dim ? 0.6 : 1)};
  &::before { content: ''; margin-left: -1px; border: 4px solid transparent; border-top-color: #4c4c4c; border-bottom: 0; }
`;
const Sep = styled.div`width: 7px; height: 19px; display: flex; justify-content: center; &::before { content: ''; width: 1px; background: #c9c9c9; }`;
const Gap = styled.div<{ $w: number }>`width: ${(p) => p.$w}px; flex: none;`;

/* Toolbar tokens: "|" handle, "v" menu arrow, "/" separator, "~name" disabled, "*name" pressed, "name+" with drop marker */
const Tools = ({ items }: { items: string }) => (
  <>
    {items.split(' ').map((t, i) => {
      if (t === '|') return <Handle key={i} $w={i === 0 ? 12.5 : 16} />;
      if (t === 'v') return <ArrowSlot key={i} />;
      if (t === '~v') return <ArrowSlot key={i} $dim />;
      if (t === '/') return <Sep key={i} />;
      const name = t.replace(/[~*+]/g, '');
      return (
        <Slot key={i} $dim={t[0] === '~'} $active={t[0] === '*'}>
          <svg viewBox="0 0 24 24">
            {icons[name]}
            {t.endsWith('+') && <Drop />}
          </svg>
        </Slot>
      );
    })}
  </>
);

const Spin = styled.div<{ $w: number; $dim?: boolean; $h?: number }>`
  width: ${(p) => p.$w}px; height: ${(p) => p.$h ?? 20}px; margin-left: 1px; display: flex; align-items: stretch; flex: none;
  border: 1px solid #b1b1b1; border-radius: 2px; background: ${(p) => (p.$dim ? '#f1f1f1' : '#fff')};
  color: ${(p) => (p.$dim ? '#808080' : '#000')}; overflow: hidden; white-space: nowrap;
`;
const SpinText = styled.div<{ $p?: number }>`flex: 1; display: flex; align-items: center; padding-left: ${(p) => p.$p ?? 4}px; letter-spacing: -0.1px;`;
const Steps = styled.div<{ $dim?: boolean }>`
  width: 14px; border-left: 1px solid #b1b1b1; display: flex; flex-direction: column; align-items: center; justify-content: center; gap: 4px;
  background: #f7f7f7; opacity: ${(p) => (p.$dim ? 0.7 : 1)};
  &::before, &::after { content: ''; border: 3.5px solid transparent; }
  &::before { border-bottom: 4px solid #555; border-top: 0; }
  &::after { border-top: 4px solid #555; border-bottom: 0; }
`;
const ComboArrow = styled.div<{ $line?: boolean; $dim?: boolean }>`
  width: 20px; display: flex; align-items: center; justify-content: center; border-left: 1px solid ${(p) => (p.$line ? '#b1b1b1' : 'transparent')};
  &::before { content: ''; border: 4px solid transparent; border-top-color: ${(p) => (p.$dim ? '#999' : '#555')}; border-bottom: 0; }
`;

/* ---------- body ---------- */

const Body = styled.div`flex: 1; display: flex; min-height: 0;`;
const Side = styled.aside`width: 318px; display: flex; flex-direction: column; flex: none;`;
const SideTitle = styled.div`
  height: 20px; display: flex; align-items: center; gap: 3px; padding: 0 2px 0 4px;
  span { flex: 1; letter-spacing: -0.25px; } svg { width: 11px; height: 11px; display: block; }
`;
const SideTools = styled.div`
  height: 31px; display: flex; align-items: center; padding: 0 0 1px 8px; svg { width: 16px; height: 16px; overflow: visible; display: block; flex: none; }
`;
const Tree = styled.div`flex: 1; background: #fff; border: 1px solid #b4b4b4; padding-top: 1px;`;
const TreeRow = styled.div`
  height: 17px; background: #f0f0f0; display: flex; align-items: center; padding-left: 23px; font-weight: 700;
  letter-spacing: -0.18px; u { text-underline-offset: 2px; text-decoration-thickness: 1px; }
`;
const Check = styled.div`
  width: 13px; height: 13px; background: #fff; border: 1px solid #b5b5b5; flex: none; svg { display: block; width: 11px; height: 11px; }
`;
const Swatch = styled.div`width: 16px; height: 16px; margin: 0 6px 0 7px; background: #91522d; border: 1px solid #5c331b;`;
const TabRow = styled.div`height: 25px; margin-top: 1px; border-top: 1px solid #b4b4b4; display: flex; align-items: flex-start; flex: none;`;
const DockTab = styled.div<{ $on?: boolean; $w: number }>`
  width: ${(p) => p.$w}px; height: ${(p) => (p.$on ? 23 : 21)}px; border: 1px solid #b4b4b4; border-top: 0; border-radius: 0 0 3px 3px;
  background: ${(p) => (p.$on ? 'linear-gradient(#f0f0f0, #fbfbfb)' : '#dcdcdc')}; display: flex; align-items: center;
  padding-left: ${(p) => (p.$on ? 10 : 9)}px; letter-spacing: ${(p) => (p.$on ? -0.25 : -0.55)}px;
`;
const Splitter = styled.div`
  width: 6px; display: flex; align-items: center; justify-content: center; flex: none;
  &::before { content: ''; height: 15px; border-left: 1px dotted #999; }
`;
const Canvas = styled.main`
  position: relative; flex: 1; margin-top: 1px; border: 1px solid #b4b4b4; background: #fff; overflow: hidden;
  > svg { display: block; }
`;
const StatusBar = styled.footer`height: 28px; flex: none; display: flex; align-items: center; padding-left: 4px;`;
const Locator = styled.div`
  width: 200px; height: 22px; border: 1px solid #b1b1b1; border-radius: 3px; background: #fff; color: #858585; display: flex; align-items: center; gap: 7px; padding-left: 8px;
  letter-spacing: -0.05px; svg { width: 12px; height: 13px; }
`;
const Ready = styled.div`padding-left: 7px; flex: 1; letter-spacing: -0.1px;`;
const Lab = styled.span<{ $w: number; $tight?: boolean }>`width: ${(p) => p.$w}px; white-space: nowrap; letter-spacing: ${(p) => (p.$tight ? -0.65 : -0.35)}px; flex: none;`;
const Cell = styled.div<{ $w: number }>`width: ${(p) => p.$w}px; display: flex; justify-content: center; flex: none;`;

const Tick = () => <svg viewBox="0 0 11 11"><path d="M2.200 5l2.300 3.700L8.800 1.500" fill="none" stroke="#000" strokeWidth="1.9" /></svg>;

/* ---------- file explorer over the map ---------- */

const Explorer = styled.section`
  position: absolute; left: 1164px; top: 410px; width: 636px; height: 399px; padding-left: 1px; overflow: hidden; display: flex; flex-direction: column;
  background: linear-gradient(#b9b9b9 22px, #2e6da4 22px 45px, #b9b9b9 45px 333px, #c0504d 333px 344px, #b9b9b9 344px);
`;
const TabStrip = styled.div`
  height: 40px; flex: none; background: #d9d9d9; border-bottom: 1px solid #e3e3e3; display: flex; padding: 7px 0 0 8px; align-items: flex-start;
  box-shadow: inset 0 -1px #cfcfcf;
`;
const ExTab = styled.div`
  width: 240px; height: 33px; border-radius: 7px 7px 0 0; background: #f3f3f3; display: flex; align-items: center; padding-left: 9px; padding-bottom: 2px;
  svg { width: 16px; height: 16px; display: block; }
  span { flex: 1; padding: 1px 0 0 10px; color: #1a1a1a; -webkit-text-stroke: 0.2px #1a1a1a; }
  svg:last-child { margin-right: 13px; }
`;
const Ctl = styled.div<{ $l: number; $t?: number }>`margin-left: ${(p) => p.$l}px; margin-top: ${(p) => p.$t ?? 0}px; svg { width: 16px; height: 16px; display: block; }`;
const WinCorner = styled.svg`position: absolute; right: 0; top: 0; width: 6px; height: 6px;`;
const NavRow = styled.div`
  height: 47px; flex: none; background: #f3f3f3; border-bottom: 1px solid #cfcfcf; display: flex; align-items: center; padding-left: 3px; padding-bottom: 1px;
  font-size: 13.2px; color: #1c1c1c;
`;
const NavCell = styled.div<{ $w: number }>`width: ${(p) => p.$w}px; display: flex; justify-content: center; flex: none; svg { width: 16px; height: 16px; display: block; }`;
const Address = styled.div`
  width: 302px; height: 32px; margin-left: 6px; background: #fcfcfc; border-radius: 4px; display: flex; align-items: center; flex: none;
  span { width: 102px; padding-left: 4px; white-space: nowrap; letter-spacing: -0.05px; }
`;
const Search = styled.div`flex: none; width: 180px; height: 32px; margin-left: 8px; padding-left: 15px; line-height: 32px; background: #fcfcfc; border-radius: 4px; color: #6a6a6a; letter-spacing: -0.2px; white-space: nowrap;`;
const Commands = styled.div`height: 55px; flex: none; background: #fff; border-bottom: 1px solid #c8c8c8; display: flex; align-items: center; color: #1a1a1a; letter-spacing: -0.2px; padding: 0 0 1px 18px;`;
const Cmd = styled.div<{ $w: number; $dim?: boolean }>`width: ${(p) => p.$w}px; display: flex; justify-content: center; flex: none; opacity: ${(p) => (p.$dim ? 0.35 : 1)}; svg { width: 17px; height: 17px; display: block; }`;
const CmdText = styled.div<{ $w: number }>`width: ${(p) => p.$w}px; flex: none; padding-top: 1px; white-space: nowrap;`;
const Bar = styled.div`width: 1px; height: 32px; background: #e5e5e5; flex: none;`;

const Content = styled.div`flex: 1; display: flex; min-height: 0; background: #fff;`;
const ListPane = styled.div`width: 619px; display: flex; flex-direction: column; position: relative;`;
const Head = styled.div`height: 25px; flex: none; display: flex; color: #4f6283;`;
const HeadCell = styled.div<{ $w: number; $p: number }>`
  width: ${(p) => p.$w}px; padding-left: ${(p) => p.$p}px; border-right: 1px solid #e3e3e3; line-height: 26px; letter-spacing: -0.05px;
`;
const Caret = styled.svg`position: absolute; left: 142px; top: 0; width: 10px; height: 6px;`;
const Rows = styled.div`flex: 1; overflow: hidden; display: flex; flex-direction: column; > div:first-child { margin-top: -17px; }`;
const FileRow = styled.div<{ $sel?: boolean }>`
  height: 27px; margin: 0 7px 4px 14px; flex: none; display: flex; align-items: center; border-radius: 3px; background: ${(p) => (p.$sel ? '#d9d9d9' : 'transparent')};
  color: #707070; letter-spacing: -0.23px; white-space: nowrap; padding-bottom: 1px;
  svg { width: 12px; height: 16px; margin: 0 6px; display: block; flex: none; }
`;
const FName = styled.div`width: 240px; color: #000; letter-spacing: -0.08px;`;
const FDate = styled.div`width: 144px;`;
const FType = styled.div`width: 100px; letter-spacing: -0.05px;`;
const FSize = styled.div`flex: 1; text-align: right; padding-right: 4px;`;
const VScroll = styled.div`
  width: 16px; background: #f0f0f0; display: flex; justify-content: center; padding-top: 141px;
  &::before { content: ''; width: 2px; height: 63px; border-radius: 1px; background: #868686; }
`;
const HTrack = styled.div`height: 16px; flex: none; background: linear-gradient(90deg, #f0f0f0 618px, #fff 618px); display: flex; align-items: center; padding: 0 0 0 17px; &::before { content: ''; width: 577px; height: 2px; border-radius: 1px; background: #868686; }`;
const ExStatus = styled.div`height: 19px; flex: none; background: #fff; display: flex; padding-left: 14px; color: #1e3a6b; line-height: 24px; letter-spacing: -0.15px; white-space: nowrap; overflow: hidden;`;
const StatCell = styled.div<{ $w: number; $line?: boolean }>`width: ${(p) => p.$w}px; flex: none; border-right: ${(p) => (p.$line ? '1px solid #f2f2f2' : '0')};`;
const ViewBtn = styled.div<{ $on?: boolean }>`
  width: 22px; height: 24px; flex: none; border: 1px solid ${(p) => (p.$on ? '#26a0da' : 'transparent')}; background: ${(p) => (p.$on ? '#d3ebf7' : '#fff')};
  display: flex; justify-content: center; padding-top: 4px; svg { width: 14px; height: 14px; display: block; }
`;
const DragArrow = styled.svg`position: absolute; left: 1050px; top: 660px; width: 140px; height: 90px;`;

const menus: [string, string, string, number][] = [
  ['Pro', 'j', 'ect', 51], ['', 'E', 'dit', 34], ['', 'V', 'iew', 39], ['', 'L', 'ayer', 42], ['', 'S', 'ettings', 56], ['', 'P', 'lugins', 53.5],
  ['Vect', 'o', 'r', 46.5], ['', 'R', 'aster', 46], ['', 'D', 'atabase', 62], ['', 'W', 'eb', 38], ['', 'M', 'esh', 43], ['Pro', 'c', 'essing', 71], ['', 'H', 'elp', 40],
];

const files: [string, string, string, string][] = [
  ['Mannings n.shp', '7/23/2018 11:40 AM', 'SHP File', '24,777 KB'],
  ['Mannings n.shx', '7/23/2018 11:40 AM', 'SHX File', '631 KB'],
  ['Project Domain.dbf', '7/25/2018 12:09 PM', 'DBF File', '1 KB'],
  ['Project Domain.prj', '7/25/2018 12:09 PM', 'PRJ File', '1 KB'],
  ['Project Domain.qpj', '7/25/2018 12:09 PM', 'QPJ File', '1 KB'],
  ['Project Domain.shp', '7/25/2018 12:09 PM', 'SHP File', '1 KB'],
  ['Project Domain.shx', '7/25/2018 12:09 PM', 'SHX File', '1 KB'],
];
const selectedFile = 5;

const line = { fill: 'none', stroke: '#444', strokeWidth: 1.1 };
const blue = { fill: 'none', stroke: '#0078d4', strokeWidth: 1.2 };
const Chev = ({ down }: { down?: boolean }) => (
  <svg viewBox="0 0 18 18"><path d={down ? 'M6 7.500l3 3 3-3' : 'M6.500 4.500L11 9 6.500 13.500'} fill="none" stroke={down ? '#999' : '#333'} strokeWidth="1.3" /></svg>
);

const commandIcons: { key: string; dim?: boolean; art: React.ReactNode }[] = [
  { key: 'cut', art: <g><path d="M4.500 1l7 11M13.500 1l-7 11" {...line} /><circle cx="4.5" cy="14" r="2.8" {...blue} /><circle cx="13.5" cy="14" r="2.8" {...blue} /></g> },
  { key: 'copy', art: <g><path d="M5 4.500H3.500q-2 0-2 2v8q0 2 2 2h5q2 0 2-1.500" {...line} /><rect x="6.5" y="2" width="9.5" height="11.5" rx="2" {...blue} /></g> },
  { key: 'paste', dim: true, art: <g><path d="M5 2.500H2.500v13H7M12 2.500h2V5M5 1.500h7v2.500H5z" {...line} /><rect x="8.5" y="6" width="8" height="11" rx="1" {...blue} /></g> },
  { key: 'rename', art: <g><path d="M11 3.500H4q-2.500 0-2.500 2.500v6q0 2.500 2.500 2.500h7M14 3.500q2.500 0 2.500 2.500v6q0 2.500-2.500 2.500" {...line} /><path d="M12.200 1.500v15M10.500 1.200h3.500M10.500 16.800h3.500M4 12.500L6.700 5.500l2.700 7M5 10.200h3.500" {...blue} /></g> },
  { key: 'share', art: <g><path d="M7 3.500H4.500q-2.500 0-2.500 2.500v7.500Q2 16 4.500 16H12q2.500 0 2.500-2.500V12" {...line} /><path d="M11 2l5.500 4.500L11 11V8.500q-4 0-6 4 0-7 6-8z" {...blue} /></g> },
  { key: 'delete', art: <path d="M1.500 4h15M6.500 4q0-2.500 2.500-2.500T11.500 4M3 4l1.200 10.500q.2 2 2 2h5.600q1.800 0 2-2L15 4M7.300 7.500v5.500M10.700 7.500v5.500" {...line} /> },
];

export default function App() {
  return (
    <Window>
      <Global />
      <TitleBar>
        <svg width="16" height="16" viewBox="0 0 16 16">
          <circle cx="7.7" cy="7.7" r="5.9" fill="none" stroke="#6ba52d" strokeWidth="3.3" />
          <path d="M9 6.500l1 3 5.500 6h-4l-4-4.500z" fill="#8ec640" />
          <path d="M7.500 7.500h3l3 3.500-1.500 2z" fill="#eee35c" /><circle cx="8" cy="8" r="1.5" fill="#ee7913" />
        </svg>
        <TitleText>*Untitled Project — QGIS</TitleText>
        <Caption>
          <svg viewBox="0 0 16 16"><path d="M3 8.500h10" stroke="#000" /></svg>
          <svg viewBox="0 0 16 16"><rect x="3.5" y="4.5" width="7" height="7" rx="1" fill="none" stroke="#000" /><path d="M5.500 4V2.500h6q1 0 1 1v6H11" fill="none" stroke="#000" /></svg>
          <svg viewBox="0 0 16 16"><path d="M3.500 3l9 9M12.500 3l-9 9" stroke="#000" strokeWidth="1.1" /></svg>
        </Caption>
      </TitleBar>
      <MenuBar>
        {menus.map(([a, b, c, w]) => (
          <MenuItem key={a + b + c} $w={w}>{a}<u>{b}</u>{c}</MenuItem>
        ))}
      </MenuBar>
      <ToolRow>
        <Tools items="| newDoc open save layout layoutMgr style | *hand panSel zoomIn zoomOut zoomFull zoomSel zoomLayer ~zoomNative zoomLast ~zoomNext mapView mapView3d bookmarkNew bookmarks clock refresh | selectRect v selectForm v deselect v selectLoc | identify abacus gear sigma table v ruler v tip ~actionGray ~v" />
      </ToolRow>
      <ToolRow>
        <Tools items="| dataSource geopackage shapefile feather memory meshLayer virtual | ~pencils+ pencil ~saveEdits ~addLine ~v ~addPoly ~vertex ~v ~tableEdit ~trash ~cut ~copy ~paste ~undo ~redo | tagYellow diagram / tagPin tagRed / ~tagPinGray ~tagEye ~tagMove ~tagRotate ~tagEdit | globePlus globeFind binoculars | python mesh profile floGray | book |" />
      </ToolRow>
      <ToolRow>
        <Tools items="| magnet ~snapV+ *snapType" />
        <Spin $w={83} $dim><SpinText>12</SpinText><Steps $dim /></Spin>
        <Gap $w={1} />
        <Spin $w={87} $dim $h={22}><SpinText>px</SpinText><ComboArrow $dim /></Spin>
        <Gap $w={1.5} />
        <Tools items="topo overlap+ ~cross ~selfSnap ~v ~trace" />
      </ToolRow>
      <ToolRow $last>
        <Tools items="| floOpen+ floCycle+ floGlobe+ floGrid+ floInfo+ floReport+ floHelp" />
      </ToolRow>

      <Body>
        <Side>
          <SideTitle>
            <span>Layers</span>
            <svg viewBox="0 0 11 11"><rect x=".5" y=".5" width="10" height="10" rx="2" fill="none" stroke="#555" /><path d="M4.500 4V2.500h4v4H7M2.500 4.500h4v4h-4z" fill="none" stroke="#555" /></svg>
            <svg viewBox="0 0 11 11"><rect x=".5" y=".5" width="10" height="10" rx="2" fill="none" stroke="#555" /><path d="M3 3l5 5M8 3l-5 5" stroke="#444" strokeWidth="1.7" /></svg>
          </SideTitle>
          <SideTools>
            {['brush', 'group', 'eye', 'filter', 'epsilon'].map((n) => (
              <Gap key={n} $w={n === 'epsilon' ? 20 : 25.3}><svg viewBox="0 0 16 16">{small[n]}</svg></Gap>
            ))}
            <ArrowSlot $w={10} />
            <Gap $w={7} />
            {['expand', 'collapse', 'remove'].map((n) => (
              <Gap key={n} $w={24.7}><svg viewBox="0 0 16 16">{small[n]}</svg></Gap>
            ))}
          </SideTools>
          <Tree>
            <TreeRow><Check><Tick /></Check><Swatch /><u>Project Domain</u></TreeRow>
          </Tree>
          <TabRow>
            <DockTab $on $w={57}>Layers</DockTab>
            <DockTab $w={62}>Browser</DockTab>
          </TabRow>
        </Side>
        <Splitter />
        <Canvas>
          <svg width="1594" height="803" viewBox="325 200 1594 803">
            <path d="M642.500 220.500H1601L1603.300 982.500 1277 960 1132.500 907 986.500 834.300 839 831.500 731.500 803 641 794z" fill="#91522d" stroke="#2a2320" strokeWidth="1" />
          </svg>
        </Canvas>
      </Body>

      <StatusBar>
        <Locator>
          <svg viewBox="0 0 12 13"><circle cx="4.8" cy="4.8" r="4" fill="none" stroke="#999" strokeWidth="1.3" /><path d="M7.700 7.800l4 4.200" stroke="#999" strokeWidth="1.5" /></svg>
          Type to locate (Ctrl+K)
        </Locator>
        <Ready>Ready</Ready>
        <Lab $w={56} $tight>Coordinate</Lab>
        <Spin $w={91} $h={22}><SpinText $p={5}>665492,961508</SpinText></Spin>
        <Cell $w={24}>
          <svg width="16" height="16" viewBox="0 0 16 16"><path d="M2 3l3-2 8 10-2 4-4-1zM9 2l3 5M12 2l-2 12" fill="#bbb" stroke="#333" strokeWidth="1.2" /><circle cx="10.5" cy="11.5" r="2.5" fill="#eee" stroke="#333" /><path d="M3 5l8 7M1.500 8l3 4" stroke="#333" /></svg>
        </Cell>
        <Gap $w={7} />
        <Lab $w={28}>Scale</Lab>
        <Spin $w={81} $h={22}><SpinText>1:10003</SpinText><ComboArrow $line /></Spin>
        <Gap $w={3} />
        <Cell $w={30}>
          <svg width="14" height="16" viewBox="0 0 14 16"><path d="M3.500 8V4.500q0-3.500 3.500-3.500t3.500 3.500V8" fill="none" stroke="#777" strokeWidth="1.6" /><rect x="1.2" y="7" width="11.6" height="8.5" rx="1" fill="#555" /><path d="M2 9.500h10M2 12h10" stroke="#6f6f6f" /></svg>
        </Cell>
        <Lab $w={47} $tight>Magnifier</Lab>
        <Spin $w={83} $h={21}><SpinText>100%</SpinText><Steps /></Spin>
        <Gap $w={9} />
        <Lab $w={50}>Rotation</Lab>
        <Spin $w={83} $h={21}><SpinText>0.0 °</SpinText><Steps /></Spin>
        <Gap $w={7} />
        <Check><Tick /></Check>
        <Gap $w={4} />
        <Lab $w={50}>Render</Lab>
        <Cell $w={18}>
          <svg width="15" height="15" viewBox="0 0 15 15"><circle cx="7.5" cy="7.5" r="7" fill="#999" /><path d="M.5 7.500h14M7.500.5v14M7.500.5q-6.500 7 0 14M7.500.5q6.500 7 0 14M1.500 4q6 2 12 0M1.500 11q6-2 12 0" fill="none" stroke="#5f5f5f" strokeWidth="0.9" /></svg>
        </Cell>
        <Lab $w={77}>EPSG:2223</Lab>
        <Cell $w={16}>
          <svg width="16" height="15" viewBox="0 0 16 15"><path d="M8 .5q7.500.5 7.500 6.500 0 3-2 4.500l1 3-4-1.700Q8 13.500 5 12.700.5 11 .5 7 .5 1 8 .5z" fill="#6a6a6a" /><g fill="#fff"><circle cx="4.7" cy="6.8" r="1" /><circle cx="8" cy="6.8" r="1" /><circle cx="11.3" cy="6.8" r="1" /></g></svg>
        </Cell>
        <Gap $w={7} />
      </StatusBar>

      <Explorer>
        <TabStrip>
          <ExTab>
            <svg viewBox="0 0 16 16"><path d="M0 3q0-1.500 1.500-1.500H6l2 2h6.500Q16 3.500 16 5v3H0z" fill="#eba51a" /><path d="M0 6q0-1 1-1h14q1 0 1 1v7.500q0 1-1 1H1q-1 0-1-1z" fill="#ffd76a" /><path d="M0 13.500q0 1 1 1h14q1 0 1-1" fill="#f0b429" /></svg>
            <span>QGIS Lesson 1</span>
            <svg viewBox="0 0 16 16"><path d="M3.500 3.500l9 9M12.500 3.500l-9 9" {...line} /></svg>
          </ExTab>
          <Ctl $l={14} $t={8}><svg viewBox="0 0 16 16"><path d="M8.500 3v10M3.500 8h10" {...line} /></svg></Ctl>
          <Ctl $l={235} $t={-1}><svg viewBox="0 0 16 16"><path d="M3 8.500h10" stroke="#000" /></svg></Ctl>
          <Ctl $l={29} $t={-1}><svg viewBox="0 0 16 16"><rect x="3.5" y="3.5" width="9" height="9" rx="0.5" fill="none" stroke="#000" /></svg></Ctl>
          <Ctl $l={30} $t={-1}><svg viewBox="0 0 16 16"><path d="M3 3l10 10M13 3L3 13" stroke="#111" strokeWidth="1.1" /></svg></Ctl>
          <WinCorner viewBox="0 0 6 6"><path d="M0 0h6v6Q5 1 0 0z" fill="#222" /></WinCorner>
        </TabStrip>
        <NavRow>
          <NavCell $w={48}><svg viewBox="0 0 18 18"><path d="M16 9H2.500M9 2.500L2.500 9 9 15.500" {...line} /></svg></NavCell>
          <NavCell $w={48}><svg viewBox="0 0 18 18"><path d="M2 9h13.500M9 2.500L15.500 9 9 15.500" {...line} stroke="#aaa" /></svg></NavCell>
          <NavCell $w={48}><svg viewBox="0 0 18 18"><path d="M9 16V2.500M2.500 9L9 2.500 15.500 9" {...line} /></svg></NavCell>
          <NavCell $w={48}><svg viewBox="0 0 18 18"><path d="M15 6.500A6.600 6.600 0 1 0 15.600 9.500M15.300 2v4.700h-4.700" {...line} /></svg></NavCell>
          <Address>
            <NavCell $w={41}><svg viewBox="0 0 18 18"><rect x="1.5" y="1.5" width="15" height="12" rx="2" fill="none" stroke="#555" strokeWidth="1.3" /><path d="M7 14v2.500M11 14v2.500M4.500 16.700h9" stroke="#555" strokeWidth="1.3" /></svg></NavCell>
            <NavCell $w={20}><Chev /></NavCell>
            <NavCell $w={38}><svg viewBox="0 0 18 18"><g fill="#222"><circle cx="4" cy="8" r="1.2" /><circle cx="9" cy="8" r="1.2" /><circle cx="14" cy="8" r="1.2" /></g></svg></NavCell>
            <span>QGIS Lesson 1</span>
            <NavCell $w={24}><Chev /></NavCell>
          </Address>
          <Search>Search QGIS Lesson 1</Search>
        </NavRow>
        <Commands>
          <Cmd $w={20}><svg viewBox="0 0 18 18"><circle cx="9" cy="9" r="7.5" {...line} /><path d="M9 5.500v7M5.500 9h7" {...blue} /></svg></Cmd>
          <Gap $w={7} />
          <CmdText $w={23}>New</CmdText>
          <Cmd $w={20}><Chev down /></Cmd>
          <Gap $w={10} />
          <Bar />
          <Gap $w={2} />
          {commandIcons.map((c) => (
            <Cmd key={c.key} $w={48} $dim={c.dim}><svg viewBox="0 0 18 18">{c.art}</svg></Cmd>
          ))}
          <Gap $w={2} />
          <Bar />
          <Gap $w={14} />
          <Cmd $w={20}><svg viewBox="0 0 18 18"><path d="M5.500 15.500V2.500M1.500 6.500l4-4 4 4" {...line} /><path d="M12.500 2.500v13M8.500 11.500l4 4 4-4" {...blue} /></svg></Cmd>
          <Gap $w={6} />
          <CmdText $w={22}>Sort</CmdText>
          <Cmd $w={18}><Chev down /></Cmd>
          <Gap $w={21} />
          <Cmd $w={20}><svg viewBox="0 0 18 18"><g fill="#222"><circle cx="2.5" cy="10" r="1.5" /><circle cx="9" cy="10" r="1.5" /><circle cx="15.5" cy="10" r="1.5" /></g></svg></Cmd>
          <Gap $w={35} />
          <Cmd $w={20}><svg viewBox="0 0 18 18"><path d="M10.500 3.500H4Q1.500 3.500 1.500 6v6Q1.500 14.500 4 14.500h6.500" {...line} /><path d="M10.500 3.500H14q2.500 0 2.500 2.500v6q0 2.500-2.500 2.500h-3.500zM12.500 7h2M12.500 9h2M12.500 11h2" {...blue} /></svg></Cmd>
          <Gap $w={6} />
          <CmdText $w={40}>Details</CmdText>
        </Commands>
        <Content>
          <ListPane>
            <Head>
              <HeadCell $w={272} $p={30}>Name</HeadCell>
              <HeadCell $w={144} $p={6}>Date modified</HeadCell>
              <HeadCell $w={120} $p={6}>Type</HeadCell>
              <HeadCell $w={80} $p={6}>Size</HeadCell>
            </Head>
            <Caret viewBox="0 0 10 6"><path d="M1.500 5L5 1.500 8.500 5" fill="none" stroke="#444" strokeWidth="1.1" /></Caret>
            <Rows>
              {files.map(([name, date, type, size], i) => (
                <FileRow key={name} $sel={i === selectedFile}>
                  <svg viewBox="0 0 12 16"><path d="M.5.5h7.500l3.500 3.500v11.500H.5zM8 .5V4h3.500" fill="#fafafa" stroke="#757575" /></svg>
                  <FName>{name}</FName>
                  <FDate>{date}</FDate>
                  <FType>{type}</FType>
                  <FSize>{size}</FSize>
                </FileRow>
              ))}
            </Rows>
          </ListPane>
          <VScroll />
        </Content>
        <HTrack />
        <ExStatus>
          <StatCell $w={55} $line>19 items</StatCell>
          <Gap $w={10} />
          <StatCell $w={85}>1 item selected</StatCell>
          <StatCell $w={60} $line>316 bytes</StatCell>
          <Gap $w={363} />
          <ViewBtn $on><svg viewBox="0 0 14 14"><path d="M1 3.500h12M1 6.500h12M1 9.500h12M1 12.500h12" stroke="#000" /></svg></ViewBtn>
          <ViewBtn><svg viewBox="0 0 14 14"><rect x="1.5" y="1" width="11" height="8.5" fill="#fff" stroke="#000" /><path d="M1 12.500h12" stroke="#000" /></svg></ViewBtn>
        </ExStatus>
      </Explorer>
      <DragArrow viewBox="0 0 140 90">
        <path d="M34 26L126 75" stroke="#ea0606" strokeWidth="10" strokeLinecap="round" />
        <path d="M10.500 14.500L44.500 15.500 33 19.500 38 32 26.500 29.500 31 41.500z" fill="#ea0606" stroke="#ea0606" strokeWidth="4" strokeLinejoin="round" />
      </DragArrow>
    </Window>
  );
}
